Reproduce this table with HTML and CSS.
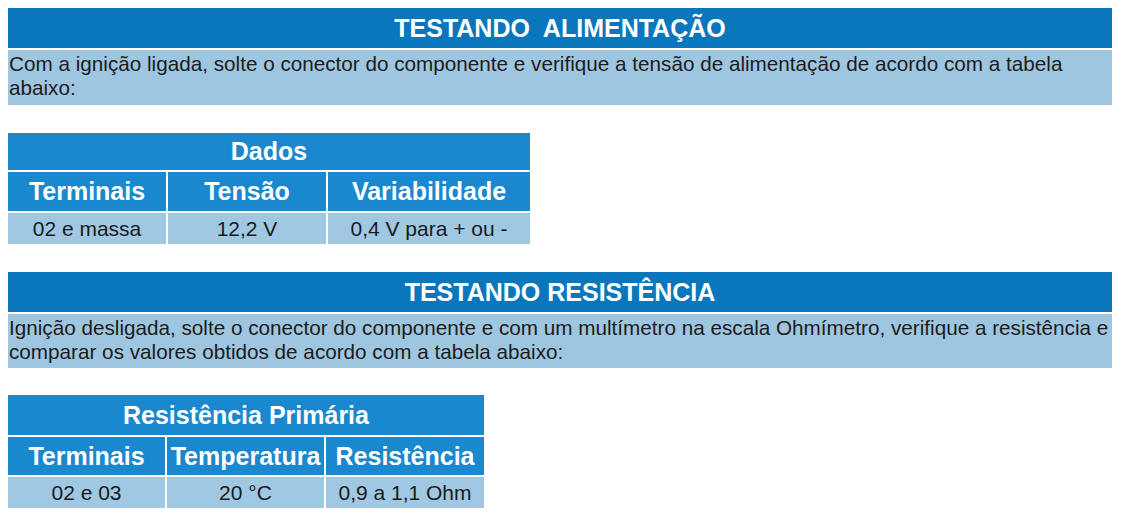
FILE: index.html
```html
<!DOCTYPE html>
<html lang="pt">
<head>
<meta charset="utf-8">
<link rel="stylesheet" href="styles.css">
</head>
<body>
<main class="page">
  <section class="block">
    <h2 class="title">TESTANDO&nbsp; ALIMENTAÇÃO</h2>
    <p class="desc">Com a ignição ligada, solte o conector do componente e verifique a tensão de alimentação de acordo com a tabela abaixo:</p>
    <div class="grid grid-a">
      <div class="cap span3">Dados</div>
      <div class="head">Terminais</div>
      <div class="head">Tensão</div>
      <div class="head">Variabilidade</div>
      <div class="cell">02 e massa</div>
      <div class="cell">12,2 V</div>
      <div class="cell">0,4 V para + ou -</div>
    </div>
  </section>
  <section class="block block-2">
    <h2 class="title">TESTANDO RESISTÊNCIA</h2>
    <p class="desc">Ignição desligada, solte o conector do componente e com um multímetro na escala Ohmímetro, verifique a resistência e comparar os valores obtidos de acordo com a tabela abaixo:</p>
    <div class="grid grid-b">
      <div class="cap span3">Resistência Primária</div>
      <div class="head">Terminais</div>
      <div class="head">Temperatura</div>
      <div class="head">Resistência</div>
      <div class="cell">02 e 03</div>
      <div class="cell">20 °C</div>
      <div class="cell">0,9 a 1,1 Ohm</div>
    </div>
  </section>
</main>
</body>
</html>
```

FILE: styles.css
```css
html, body {
  margin: 0;
  padding: 0;
  background: #ffffff;
}
body {
  padding: 8px;
  font-family: "Liberation Sans", Arial, sans-serif;
}
.page {
  width: 1104px;
}
.block {
  display: flex;
  flex-direction: column;
  align-items: flex-start;
}
.block-2 {
  margin-top: 28px;
}
.title {
  margin: 0;
  width: 100%;
  height: 40px;
  box-sizing: border-box;
  background: #0a76bc;
  color: #ffffff;
  font-size: 25px;
  font-weight: bold;
  line-height: 41px;
  text-align: center;
}
.desc {
  margin: 2px 0 0 0;
  width: 100%;
  height: 55px;
  box-sizing: border-box;
  padding: 2px 0 0 1px;
  background: #9fc6e0;
  color: #1c1c1c;
  font-size: 20.7px;
  line-height: 24px;
}
.block-2 .desc {
  height: 54px;
}
.grid {
  display: grid;
  gap: 2px;
  margin-top: 28px;
}
.block-2 .grid {
  margin-top: 27px;
}
.grid-a {
  grid-template-columns: 158px 158px 202px;
  grid-template-rows: 37px 39px 31px;
}
.grid-b {
  grid-template-columns: 157px 157px 158px;
  grid-template-rows: 40px 38px 31px;
}
.span3 {
  grid-column: 1 / 4;
}
.cap, .head {
  background: #1a88cf;
  color: #ffffff;
  font-weight: bold;
  font-size: 25px;
  display: flex;
  align-items: center;
  justify-content: center;
  white-space: nowrap;
}
.cell {
  background: #a0c8e3;
  color: #1a1a1a;
  font-size: 21px;
  display: flex;
  align-items: center;
  justify-content: center;
  white-space: nowrap;
}
```
